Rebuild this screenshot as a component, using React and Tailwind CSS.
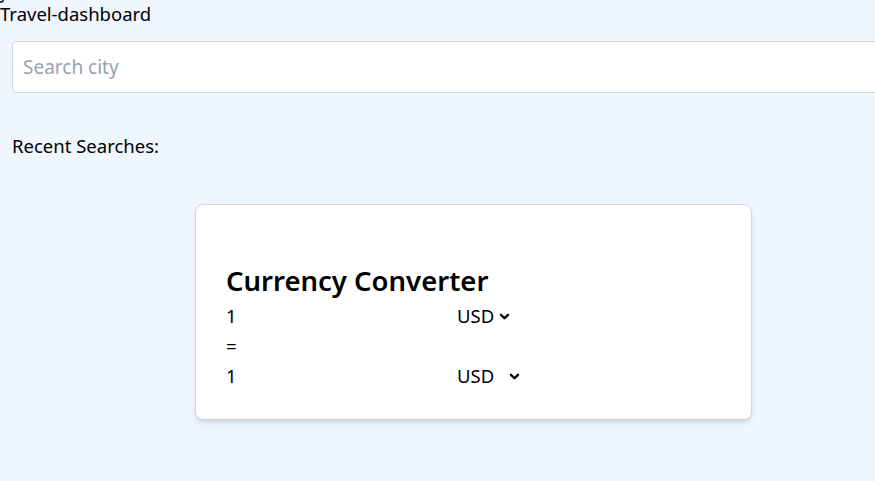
import React, { useState } from "react";

const Chevron = ({ className }) => (
  <svg viewBox="0 0 12 12" className={className} fill="none" stroke="currentColor" strokeWidth="2.2" strokeLinecap="round" strokeLinejoin="round">
    <path d="M2.8 4.5 6 7.6 9.2 4.5" />
  </svg>
);

const App = () => {
  const [city, setCity] = useState("");

  return (
    <div className="min-h-screen w-full overflow-hidden bg-blue-50 font-['Noto_Sans',sans-serif] text-black">
      <div className="w-[947px]">
        <div className="relative h-[28px] text-[18.5px] leading-[28px]">
          <span className="absolute -left-[3px] -top-[3px] w-[7px] h-[6px] border-2 border-gray-700 rounded-sm"></span>
          Travel-dashboard
        </div>
        <div className="pl-3 pt-[13px]">
          <input
            value={city}
            onChange={(e) => setCity(e.target.value)}
            placeholder="Search city"
            className="w-[923px] h-[52px] px-[10px] bg-white border border-gray-300 rounded text-[19px] placeholder:text-gray-400 outline-none"
          />
        </div>
        <p className="ml-3 mt-[40px] text-[18.5px] leading-[26px]">Recent Searches:</p>
        <div className="flex justify-center mt-[45px]">
          <div className="w-[557px] h-[216px] bg-white border border-gray-300 rounded-lg shadow-md px-[30px] pt-[58px]">
            <h2 className="text-[27.5px] font-semibold leading-[36px] mb-[2px]">Currency Converter</h2>
            <div className="grid grid-cols-[231px_auto] text-[18.5px] leading-[30px]">
              <span>1</span>
              <span className="flex items-center gap-[4px]">
                USD <Chevron className="w-[13px] h-[13px]" />
              </span>
              <span className="col-span-2">=</span>
              <span>1</span>
              <span className="flex items-center gap-[14px]">
                USD <Chevron className="w-[13px] h-[13px]" />
              </span>
            </div>
          </div>
        </div>
      </div>
    </div>
  );
};

export default App;
